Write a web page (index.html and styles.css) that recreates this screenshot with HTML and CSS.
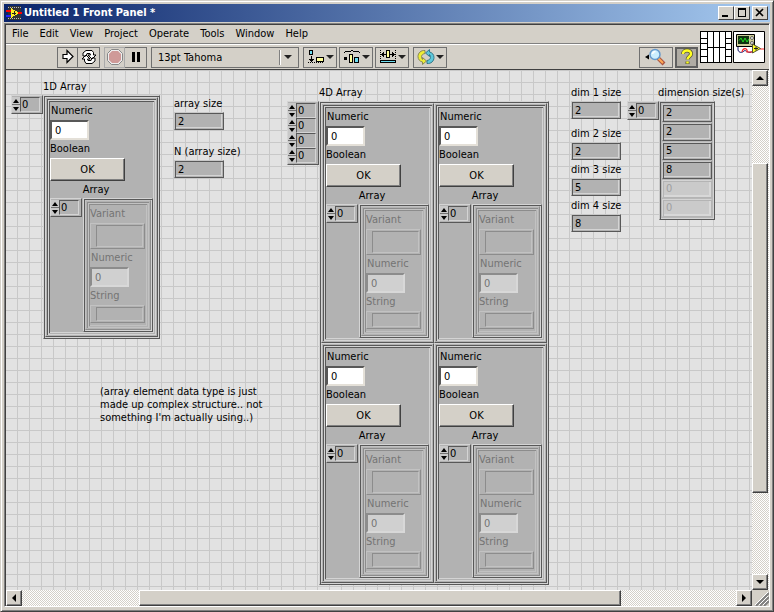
FILE: index.html
```html
<!DOCTYPE html>
<html lang="en">
<head>
    <meta charset="UTF-8">
    <meta name="viewport" content="width=device-width, initial-scale=1.0">
    <title>Untitled 1 Front Panel *</title>
    <link rel="stylesheet" href="styles.css">
</head>
<body>

<div class="window">
    <div class="titlebar">
        <svg class="app-icon" width="16" height="14" viewBox="0 0 16 14" shape-rendering="crispEdges">
            <rect x="2" y="0" width="13" height="14" fill="#333"/>
            <path d="M2 1.500h13M2 12.500h13" stroke="#bbb" stroke-dasharray="1 1"/>
            <path d="M0 4.500h5M11 7h5" stroke="#f00" stroke-width="2"/>
            <path d="M0 9.500h5" stroke="#22f" stroke-width="2"/>
            <path d="M5 2v10l8-5z" fill="#fe2"/>
            <path d="M6 7h4M8 5v4" stroke="#222"/>
        </svg>
        <h1>Untitled 1 Front Panel *</h1>
        <div class="window-buttons">
            <button type="button" aria-label="Minimize"><svg width="12" height="10" viewBox="0 0 12 10"><path d="M2 8h6" stroke="#000" stroke-width="2"/></svg></button>
            <button type="button" aria-label="Maximize"><svg width="12" height="10" viewBox="0 0 12 10" shape-rendering="crispEdges"><path d="M2.500 1v8M9.500 1v8M2 8.500h8" fill="none" stroke="#000"/><path d="M2 1h8" stroke="#000" stroke-width="2"/></svg></button>
            <button type="button" class="close" aria-label="Close"><svg width="12" height="10" viewBox="0 0 12 10"><path d="M2 1l7 7M9 1l-7 7" stroke="#000" stroke-width="1.700"/></svg></button>
        </div>
    </div>

    <div class="client">
        <div class="header">
            <div class="bars">
                <nav class="menu">
                    <a href="#">File</a>
                    <a href="#">Edit</a>
                    <a href="#">View</a>
                    <a href="#">Project</a>
                    <a href="#">Operate</a>
                    <a href="#">Tools</a>
                    <a href="#">Window</a>
                    <a href="#">Help</a>
                </nav>
                <div class="toolbar">
                    <div class="group">
                        <button type="button" aria-label="Run"><svg width="18" height="18" viewBox="0 0 18 18"><path d="M4 6.500h4v-4l6 6-6 6v-4H4z" fill="#fff" stroke="#000" stroke-width="1.200"/></svg></button>
                        <button type="button" aria-label="Run continuously"><svg width="18" height="18" viewBox="0 0 18 18"><path d="M3 8V5l3-2.500h6l1.500 2V7H16l-4 4-4-4h2.500L10 5.500H7L6 8zM15 10v3l-3 2.500H6L4.500 13v-2H2l4-4 4 4H7.500L8 12.500h3L12 10z" fill="#fff" stroke="#000"/></svg></button>
                    </div>
                    <div class="group">
                        <button type="button" class="off" aria-label="Abort"><svg width="18" height="18" viewBox="0 0 18 18"><path d="M5.500 1.500h7l4 4v7l-4 4h-7l-4-4v-7z" fill="#eee" stroke="#888"/><path d="M6 3h6l3 3v6l-3 3H6l-3-3V6z" fill="#cf9a98"/></svg></button>
                        <button type="button" aria-label="Pause"><svg width="18" height="18" viewBox="0 0 18 18"><path d="M6.500 4v10M11.500 4v10" stroke="#000" stroke-width="3"/></svg></button>
                    </div>
                    <div class="font-box">
                        <select aria-label="Text settings">
                            <option>13pt Tahoma</option>
                        </select>
                        <i class="drop"></i>
                    </div>
                    <button type="button" class="tool" aria-label="Align objects">
                        <svg width="18" height="16" viewBox="0 0 18 16" shape-rendering="crispEdges"><path d="M2.500 1.500h3v4h-3z" fill="#6cdcf0" stroke="#000"/><path d="M9.500 8.500h7v4h-7z" fill="#ff9" stroke="#000"/><path d="M4.500 7v6M2 10.500h5M3 11.500h3" stroke="#000"/><path d="M1 13.500h16" stroke="#000" stroke-dasharray="1 1"/></svg><i class="drop"></i>
                    </button>
                    <button type="button" class="tool" aria-label="Distribute objects">
                        <svg width="18" height="16" viewBox="0 0 18 16" shape-rendering="crispEdges"><path d="M1 3.500h1M2 2.500h6M8 1.500h2M10 2.500h6M16 3.500h1" stroke="#000"/><path d="M1 8h3v3H1z"/><path d="M6.500 5.500h3v8h-3z" fill="#ff9" stroke="#000"/><path d="M11.500 8.500h4v5h-4z" fill="#6cdcf0" stroke="#000"/></svg><i class="drop"></i>
                    </button>
                    <button type="button" class="tool" aria-label="Resize objects">
                        <svg width="18" height="16" viewBox="0 0 18 16" shape-rendering="crispEdges"><path d="M1.500 1v9M16.500 1v9" stroke="#000" stroke-dasharray="1 1"/><path d="M2 5.500h14" stroke="#000"/><path d="M2 5.500l3-3v6zM16 5.500l-3-3v6z"/><path d="M7.500 1.500h3v7h-3z" fill="#ff9" stroke="#000"/><path d="M1.500 11.500h15v2h-15z" fill="#6cdcf0" stroke="#000"/></svg><i class="drop"></i>
                    </button>
                    <button type="button" class="tool reorder" aria-label="Reorder">
                        <svg width="18" height="16" viewBox="0 0 18 16"><path d="M8 1.500C4 1 1 4 1 7.500c0 3 2 5 4.500 5.500v2.500L9.500 12 5.500 8.500v2C3.500 8 4.500 5 8 4.500z" fill="#ee3" stroke="#885"/><path d="M10 14.500c4 .5 7-2.500 7-6 0-3-2-5-4.500-5.500V.5L8.500 4l4 3.500v-2c2 2.500 1 5.500-2.500 6z" fill="#5cc8dc" stroke="#378"/></svg><i class="drop"></i>
                    </button>
                    <button type="button" class="search" aria-label="Search">
                        <svg width="24" height="18" viewBox="0 0 24 18"><path d="M1 9l4-2.500v5z"/><path d="M14 10l6 6" stroke="#a54" stroke-width="4"/><path d="M14 10l5 5" stroke="#fa5" stroke-width="2"/><circle cx="11" cy="6.500" r="5" fill="#cef" stroke="#69c" stroke-width="1.500"/><path d="M8.500 6a3 3 0 0 1 3-2.500" fill="none" stroke="#fff" stroke-width="1.500"/></svg>
                    </button>
                    <button type="button" class="help" aria-label="Context help">
                        <svg width="14" height="18" viewBox="0 0 14 18"><path d="M3 6c0-5 8.500-4.500 8 0 0 2.500-3.500 2.500-3.500 5.500M7.500 13.500v2.500" fill="none" stroke="#553" stroke-width="4"/><path d="M3 6c0-5 8.500-4.500 8 0 0 2.500-3.500 2.500-3.500 5.500M7.500 13.500v2" fill="none" stroke="#ff2" stroke-width="2.500"/></svg>
                    </button>
                </div>
            </div>
            <div class="vi-icons">
                <svg width="32" height="32" viewBox="0 0 32 32" shape-rendering="crispEdges"><path d="M.5.5h31v31H.5z" fill="#fff" stroke="#000"/><path d="M7.500 0v32M13.500 0v32M19.500 0v32M25.500 0v32M7 16.500h19M0 7.500h7M0 12.500h7M0 18.500h7M0 25.500h7M25 7.500h7M25 12.500h7M25 18.500h7M25 25.500h7" stroke="#000"/></svg>
                <svg width="32" height="32" viewBox="0 0 32 32"><path d="M.5.5h31v31H.5z" fill="#fff" stroke="#000"/><path d="M3.500 3.500h18v12h-18z" fill="#cc9" stroke="#000"/><path d="M5 5h11v8H5z" fill="#131"/><path d="M6 9.500l2-2.500 2 4 2-4 2 4 2-3" fill="none" stroke="#2d2"/><circle cx="19" cy="7" r="1.500" fill="#eee" stroke="#333" stroke-width=".7"/><circle cx="19" cy="12" r="1.500" fill="#eee" stroke="#333" stroke-width=".7"/><path d="M5 16v3c1 3 4 3 6 1s4 4 9 0" fill="none" stroke="#116"/><path d="M9 21c1-5 6-4 5 0h6M27 18h4" fill="none" stroke="#f22" stroke-width="1.200"/><path d="M19.500 13v9l8-4.500z" fill="#ff2" stroke="#553"/><path d="M21 17.500h4M23 15.500v4" stroke="#222"/></svg>
            </div>
        </div>

        <div class="view">
            <main class="panel">
                <span class="caption array-1d-caption">1D Array</span>
                <div class="array array-1d" data-index="1" data-columns="1" data-cells="1"></div>

                <label class="indicator array-size">array size<input value="2" readonly></label>
                <label class="indicator n-size">N (array size)<input value="2" readonly></label>

                <span class="caption array-4d-caption">4D Array</span>
                <div class="array array-4d" data-index="4" data-columns="2" data-cells="4"></div>

                <label class="indicator dim-1">dim 1 size<input value="2" readonly></label>
                <label class="indicator dim-2">dim 2 size<input value="2" readonly></label>
                <label class="indicator dim-3">dim 3 size<input value="5" readonly></label>
                <label class="indicator dim-4">dim 4 size<input value="8" readonly></label>

                <span class="caption sizes-caption">dimension size(s)</span>
                <div class="array sizes" data-index="1">
                    <div class="size-list">
                        <input aria-label="size 0" value="2" readonly>
                        <input aria-label="size 1" value="2" readonly>
                        <input aria-label="size 2" value="5" readonly>
                        <input aria-label="size 3" value="8" readonly>
                        <input aria-label="size 4" value="0" disabled>
                        <input aria-label="size 5" value="0" disabled>
                    </div>
                </div>

                <p class="comment">(array element data type is just<br>made up complex structure.. not<br>something I'm actually using..)</p>
            </main>

            <div class="scroll vertical">
                <button type="button" aria-label="Scroll up"><i class="tri up"></i></button>
                <span class="before"></span>
                <span class="thumb"></span>
                <span class="after"></span>
                <button type="button" aria-label="Scroll down"><i class="tri down"></i></button>
            </div>
            <div class="scroll horizontal">
                <button type="button" aria-label="Scroll left"><i class="tri left"></i></button>
                <span class="before"></span>
                <span class="thumb"></span>
                <span class="after"></span>
                <button type="button" aria-label="Scroll right"><i class="tri right"></i></button>
            </div>
            <div class="grip">
                <svg width="14" height="14" viewBox="0 0 14 14"><path d="M1 14L14 1M5 14l9-9M9 14l5-5" stroke="#808080" stroke-width="2"/><path d="M0 13L13 0M4 13l9-9M8 13l5-5" stroke="#fff"/></svg>
            </div>
        </div>
    </div>
</div>

<!-- one cluster element of an array -->
<template id="cluster">
    <div class="cluster">
        <label class="field">Numeric<input value="0"></label>
        <span class="caption">Boolean</span>
        <button type="button" class="ok">OK</button>
        <span class="caption inner-caption">Array</span>
        <div class="array inner" data-index="1">
            <div class="frame">
                <div class="cluster disabled">
                    <span class="caption">Variant</span>
                    <div class="well variant"><span></span></div>
                    <label class="field">Numeric<input value="0" disabled></label>
                    <span class="caption">String</span>
                    <div class="well"><span></span></div>
                </div>
            </div>
        </div>
    </div>
</template>

<script src="script.js"></script>
</body>
</html>
```
FILE: styles.css
```css
* {
    box-sizing: border-box;
}

body {
    margin: 0;
    font-family: "DejaVu Sans Condensed", "DejaVu Sans", sans-serif;
    font-size: 11px;
    line-height: 18px;
    color: #000;
}

button, input, select {
    font: inherit;
    color: inherit;
    margin: 0;
    padding: 0;
    border-radius: 0;
    min-width: 0;
}

button {
    display: flex;
    align-items: center;
    justify-content: center;
    background: #d4d0c8;
}

svg {
    display: block;
    flex: none;
}

/* window */
.window {
    display: flex;
    flex-direction: column;
    height: 100vh;
    padding: 2px;
    background: #d4d0c8;
    border: 1px solid;
    border-color: #d4d0c8 #404040 #404040 #d4d0c8;
    box-shadow: inset 1px 1px #fff, inset -1px -1px #808080;
}

.titlebar {
    display: flex;
    align-items: center;
    flex: none;
    height: 18px;
    margin: 1px;
    padding: 0 2px;
    background: linear-gradient(to right, #0a246a, #a6caf0);
}

.titlebar h1 {
    flex: 1;
    margin: 0 0 0 2px;
    font-size: 11px;
    color: #fff;
}

.window-buttons {
    display: flex;
}

.window-buttons button {
    width: 16px;
    height: 14px;
    border: 1px solid;
    border-color: #fff #404040 #404040 #fff;
}

.window-buttons .close {
    margin-left: 2px;
}

.client {
    display: flex;
    flex: 1;
    flex-direction: column;
    min-height: 0;
    margin: 0 1px 2px;
    border: 1px solid;
    border-color: #808080 #fff #fff #808080;
    box-shadow: inset 1px 1px #404040;
    padding: 1px 0 0 1px;
}

/* menu and toolbar */
.header {
    display: flex;
    border-bottom: 1px solid #404040;
}

.bars {
    flex: 1;
}

.menu {
    display: flex;
    gap: 11px;
    height: 19px;
    padding-left: 6px;
    border-bottom: 1px solid #808080;
}

.menu a {
    color: #000;
    text-decoration: none;
}

.toolbar {
    display: flex;
    align-items: center;
    height: 25px;
    padding-left: 51px;
    border-top: 1px solid #fff;
}

.toolbar button {
    height: 21px;
    border: 1px solid #707070;
}

.group {
    display: flex;
    margin-right: 4px;
}

.group button {
    width: 21px;
}

.group button + button {
    width: 22px;
    border-left: 0;
}

.toolbar .off {
    border-color: #aaa;
}

.font-box {
    display: flex;
    align-items: center;
    width: 148px;
    height: 21px;
    padding-right: 6px;
    border: 1px solid #707070;
}

.font-box select {
    flex: 1;
    height: 15px;
    padding-left: 6px;
    line-height: 15px;
    appearance: none;
    background: none;
    border: 0;
    border-right: 1px solid #808080;
    box-shadow: 1px 0 #fff;
}

.font-box .drop {
    margin-left: 4px;
}

.drop {
    border: 4px solid transparent;
    border-top-color: #222;
    border-bottom: 0;
}

.toolbar .tool {
    gap: 1px;
    width: 34px;
    margin-left: 2px;
}

.toolbar .font-box + .tool,
.toolbar .reorder {
    margin-left: 4px;
}

.toolbar .search {
    width: 34px;
    margin-left: auto;
}

.toolbar .help {
    width: 23px;
    margin: 0 2px;
    background: #b0aca4;
    border: 2px solid #606060;
}

.vi-icons {
    display: flex;
    gap: 1px;
    padding: 6px 4px 0 0;
}

/* work area */
.view {
    display: grid;
    grid-template: minmax(0, 1fr) 16px / minmax(0, 1fr) 17px;
    flex: 1;
    min-height: 0;
}

.panel {
    position: relative;
    overflow: hidden;
    background:
        linear-gradient(to right, #c8c8c8 1px, transparent 1px) 11px 0 / 12px 12px,
        linear-gradient(#c8c8c8 1px, transparent 1px) 0 0 / 12px 12px,
        #e2e2e2;
}

.scroll {
    display: flex;
    background: repeating-conic-gradient(#fff 0 25%, #d4d0c8 0 50%) 0 0 / 2px 2px;
}

.vertical {
    flex-direction: column;
}

.scroll button, .thumb {
    flex: none;
    width: 16px;
    height: 16px;
    background: #d4d0c8;
    border: 1px solid;
    border-color: #fff #404040 #404040 #fff;
    box-shadow: inset -1px -1px #808080;
}

.vertical .before { flex: 77; }
.vertical .thumb { flex: 330; }
.vertical .after { flex: 81; }
.horizontal .before { flex: 117; }
.horizontal .thumb { flex: 482; }
.horizontal .after { flex: 115; }

.tri {
    border: 4px solid transparent;
}

.tri.up { border-top: 0; border-bottom-color: #000; }
.tri.down { border-bottom: 0; border-top-color: #000; }
.tri.left { border-left: 0; border-right-color: #000; }
.tri.right { border-right: 0; border-left-color: #000; }

.grip {
    display: flex;
    align-items: flex-end;
    justify-content: flex-end;
}

/* controls on the panel */
.caption {
    display: block;
    white-space: nowrap;
}

.panel > * {
    position: absolute;
    margin: 0;
}

.array {
    display: flex;
    align-items: flex-start;
}

.index {
    width: 32px;
    padding: 1px 2px 1px 0;
    background: #b2b2b2;
    border: 1px solid;
    border-color: #d4d4d4 #585858 #585858 #d4d4d4;
}

.index-row {
    display: flex;
    height: 15px;
}

.spin {
    display: flex;
    flex-direction: column;
    justify-content: space-between;
    width: 8px;
    background: #707070;
}

.spin button {
    width: 8px;
    height: 7px;
    background: #c8c8c8;
    border: 0;
}

.spin .tri {
    border-width: 3px;
}

.spin .tri.up { border-top: 0; border-bottom-width: 4px; }
.spin .tri.down { border-bottom: 0; border-top-width: 4px; }

.index input {
    flex: 1;
    width: 0;
    padding-left: 1px;
    background: #b2b2b2;
    border: 1px solid;
    border-color: #585858 #d4d4d4 #d4d4d4 #585858;
}

.frame {
    display: grid;
    background: #b2b2b2;
    border: 1px solid;
    border-color: #d4d4d4 #585858 #585858 #d4d4d4;
    box-shadow: inset 1px 1px #585858, inset -1px -1px #d4d4d4;
    padding: 1px;
}

.cluster {
    --light: #d4d4d4;
    --dark: #585858;
    display: flex;
    flex-direction: column;
    width: 113px;
    height: 240px;
    padding: 4px;
    background: #b2b2b2;
    border: 1px solid;
    border-color: var(--light) var(--dark) var(--dark) var(--light);
    box-shadow:
        inset 1px 1px #b2b2b2, inset -1px -1px #b2b2b2,
        inset 2px 2px var(--dark), inset -2px -2px var(--light),
        inset 3px 3px var(--light), inset -3px -3px #b2b2b2,
        inset 4px 4px var(--dark), inset -4px -4px var(--light);
}

.field {
    display: flex;
    flex-direction: column;
    padding-left: 1px;
}

.field input {
    width: 39px;
    height: 20px;
    margin-left: -1px;
    padding-left: 3px;
    background: #fff;
    border: 2px solid;
    border-color: #585858 #e4e0d8 #e4e0d8 #585858;
}

.ok {
    flex: none;
    width: 75px;
    height: 23px;
    border: 1px solid;
    border-color: #fff #404040 #404040 #fff;
    box-shadow: inset -1px -1px #808080;
}

.inner-caption {
    width: 92px;
    line-height: 17px;
    text-align: center;
}

.inner {
    flex: 1;
    gap: 1px;
    align-items: stretch;
}

.inner .index {
    align-self: flex-start;
}

.inner .frame {
    width: 70px;
}

.disabled {
    --light: #c2c2c2;
    --dark: #8c8c8c;
    width: auto;
    height: auto;
    color: #747474;
}

.disabled .field input {
    background: #d0d0d0;
    border-color: #8c8c8c #d8d8d8 #d8d8d8 #8c8c8c;
}

.well {
    display: flex;
    width: 55px;
    height: 18px;
    padding: 1px 1px 1px 5px;
    border: 1px solid;
    border-color: var(--light) var(--dark) var(--dark) var(--light);
}

.well span {
    flex: 1;
    border: 1px solid;
    border-color: var(--dark) var(--light) var(--light) var(--dark);
}

.variant {
    height: 26px;
}

.indicator {
    display: flex;
    flex-direction: column;
    line-height: 16px;
    white-space: nowrap;
}

.indicator input, .size-list input {
    width: 50px;
    height: 18px;
    padding: 0 2px 0 3px;
    background: #b2b2b2;
    border: 1px solid;
    border-color: #c8c8c8 #585858 #585858 #c8c8c8;
    box-shadow: inset 1px 1px #585858, inset -1px -1px #b2b2b2, inset -2px -2px #d4d4d4;
}

.size-list {
    display: flex;
    flex-direction: column;
    width: 56px;
    height: 119px;
    gap: 1px;
    padding: 2px;
    background: #b8b8b8;
    border: 1px solid;
    border-color: #c8c8c8 #585858 #585858 #c8c8c8;
    box-shadow: inset 1px 1px #585858, inset -1px -1px #d4d4d4;
}

.size-list input:disabled {
    color: #a0a0a0;
    background: #cacaca;
    border-color: #d4d4d4 #b4b4b4 #b4b4b4 #d4d4d4;
    box-shadow: inset 1px 1px #b4b4b4, inset -2px -2px #d8d8d8;
}

.comment {
    line-height: 13px;
    white-space: nowrap;
}

/* where each object sits on the panel */
.array-1d-caption { left: 37px; top: 8px; }
.array-1d { left: 5px; top: 25px; }
.array-size { left: 168px; top: 26px; }
.n-size { left: 168px; top: 74px; }
.array-4d-caption { left: 313px; top: 14px; }
.array-4d { left: 281px; top: 31px; }
.dim-1 { left: 565px; top: 15px; }
.dim-2 { left: 565px; top: 56px; }
.dim-3 { left: 565px; top: 92px; }
.dim-4 { left: 565px; top: 128px; }
.sizes-caption { left: 652px; top: 14px; }
.sizes { left: 621px; top: 31px; }
.comment { left: 94px; top: 315px; }
```
FILE: script.js
```js
const cluster = document.getElementById('cluster');

// index display with one row per dimension
function addIndex(array) {
    const index = document.createElement('div');
    index.className = 'index';
    for (let i = 0; i < Number(array.dataset.index); i++) {
        index.innerHTML += `
            <div class="index-row">
                <span class="spin">
                    <button type="button" aria-label="Next index"><i class="tri up"></i></button>
                    <button type="button" aria-label="Previous index"><i class="tri down"></i></button>
                </span>
                <input aria-label="Index ${i}" value="0">
            </div>
        `;
    }
    array.prepend(index);
}

// fill the big arrays with clusters
document.querySelectorAll('[data-cells]').forEach(array => {
    const frame = document.createElement('div');
    frame.className = 'frame';
    frame.style.gridTemplateColumns = `repeat(${array.dataset.columns}, auto)`;
    for (let i = 0; i < Number(array.dataset.cells); i++) {
        frame.appendChild(cluster.content.cloneNode(true));
    }
    array.appendChild(frame);
});

document.querySelectorAll('.array').forEach(addIndex);
```
